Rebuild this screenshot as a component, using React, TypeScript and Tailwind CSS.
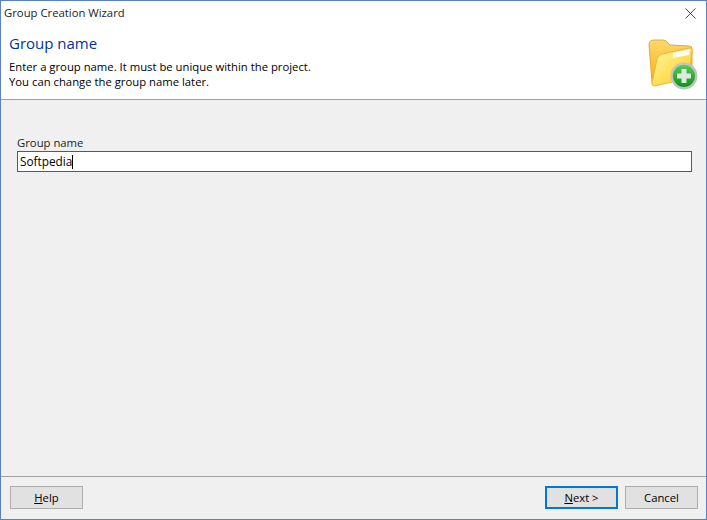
import { X } from "lucide-react";

function FolderIcon() {
  return (
    <svg width="50" height="52" viewBox="0 0 50 52">
      <defs>
        <linearGradient id="back" x1="0" y1="0" x2="0" y2="1">
          <stop offset="0" stopColor="#fdd86a" />
          <stop offset="1" stopColor="#f5b010" />
        </linearGradient>
        <linearGradient id="front" x1="0" y1="0" x2="1" y2="1">
          <stop offset="0" stopColor="#fff9a0" />
          <stop offset="1" stopColor="#ffc818" />
        </linearGradient>
        <linearGradient id="ball" x1="0" y1="0" x2="0" y2="1">
          <stop offset="0" stopColor="#58c858" />
          <stop offset="1" stopColor="#0c9418" />
        </linearGradient>
      </defs>
      <path d="M1 6 Q1 1 6 1 L15 1 Q18 1 20 4 L22 6 L41 7 Q44 7 44 10 L44 36 L6 46 Q4 46 4 43 Z" fill="url(#back)" stroke="#e0a840" />
      <path d="M6 47 Q4 47 4 44 L9 20 Q10 16 14 15 L41 9 Q45 9 44 13 L41 36 Q40 39 38 40 Z" fill="url(#front)" stroke="#eab43a" />
      <path d="M25 14 L42 10 L41 16 L25 19 Z" fill="#fdfdf6" />
      <circle cx="36" cy="37" r="13.5" fill="#bfc4bf" />
      <circle cx="36" cy="37" r="11" fill="url(#ball)" />
      <path d="M33.5 30 H38.5 V34.5 H43 V39.5 H38.5 V44 H33.5 V39.5 H29 V34.5 H33.5 Z" fill="#dfe8df" />
    </svg>
  );
}

function WizardButton({ children, primary }: { children: React.ReactNode; primary?: boolean }) {
  return (
    <button
      className={
        primary
          ? "w-[73px] h-[23px] pt-[1px] bg-[#e1e1e1] border-2 border-[#0078d7] text-[11.3px] text-black"
          : "w-[73px] h-[23px] pt-[1px] bg-[#e1e1e1] border border-[#adadad] text-[11.3px] text-black"
      }
    >
      {children}
    </button>
  );
}

export default function App() {
  return (
    <div className="w-[707px] h-[520px] flex flex-col bg-[#f0f0f0] border border-t-0 border-[#5b80c4] font-['Open_Sans','Noto_Sans',sans-serif] text-[11.3px] text-black overflow-hidden">
      <div className="h-px bg-[#5b80c4]" />
      <div className="bg-white h-[99px] flex flex-col border-b border-[#a0a0a0]">
        <div className="h-[25px] flex items-center justify-between pl-[3px] pr-[6px]">
          <span className="text-[#222]">Group Creation Wizard</span>
          <X size={19} strokeWidth={0.9} />
        </div>
        <div className="flex justify-between pl-2 pr-[8px]">
          <div>
            <div className="text-[15px] leading-[22px] text-[#003399] mt-[6px]">Group name</div>
            <p className="mt-[5px] leading-[15px]">Enter a group name. It must be unique within the project.</p>
            <p className="leading-[15px]">You can change the group name later.</p>
          </div>
          <div className="mt-[13px]">
            <FolderIcon />
          </div>
        </div>
      </div>
      <div className="flex-1 px-4 pt-[35px]">
        <label className="block leading-[15px] mb-[1px] text-[#222]">Group name</label>
        <div className="h-[21px] mr-[-2px] bg-white border border-[#0a6cc8] flex items-center px-[2px] pt-[1px] text-[11.8px]">
          <span>Softpedia</span>
          <span className="w-px h-[14px] bg-black" />
        </div>
      </div>
      <div className="h-[43px] border-t border-[#a0a0a0] flex items-center justify-between pl-[9px] pr-2 pb-[1px]">
        <WizardButton>
          <span className="underline">H</span>elp
        </WizardButton>
        <div className="flex gap-[7px]">
          <WizardButton primary>
            <span className="underline">N</span>ext &gt;
          </WizardButton>
          <WizardButton>Cancel</WizardButton>
        </div>
      </div>
    </div>
  );
}
